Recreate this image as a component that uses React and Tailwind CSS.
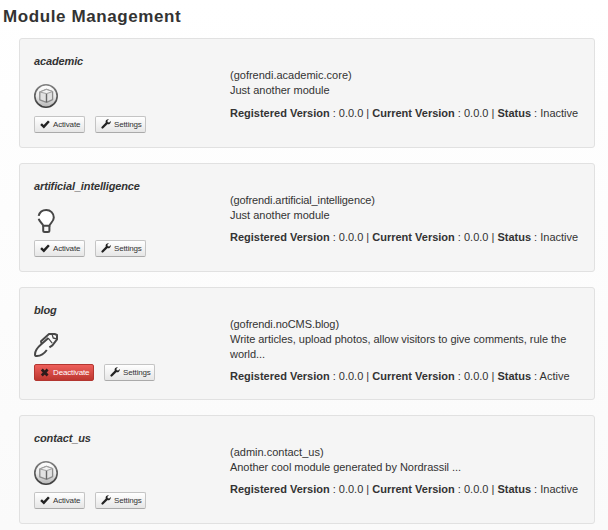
import React from "react";

function CubeIcon() {
  return (
    <svg width="24" height="24" viewBox="0 0 24 24" fill="none">
      <defs>
        <linearGradient id="ring" x1="0" y1="0" x2="0" y2="1">
          <stop offset="0" stopColor="#808080" />
          <stop offset="1" stopColor="#3c3c3c" />
        </linearGradient>
        <linearGradient id="disc" x1="0" y1="0" x2="0" y2="1">
          <stop offset="0" stopColor="#ffffff" />
          <stop offset="0.5" stopColor="#ececec" />
          <stop offset="1" stopColor="#b4b4b4" />
        </linearGradient>
      </defs>
      <circle cx="12" cy="12" r="11.2" fill="url(#disc)" stroke="url(#ring)" strokeWidth="1.6" />
      <path d="M5.8 8 L12.4 5.4 L18.6 7.6 V15.6 L12.6 18.4 L5.8 15.8 Z" fill="#e2e2e2" stroke="#8c8c8c" strokeWidth="1.3" strokeLinejoin="round" />
      <path d="M5.8 8 L12.4 5.4 L18.6 7.6 L12.6 9.6 Z" fill="#f2f2f2" stroke="#a0a0a0" strokeWidth="1" />
      <path d="M12.5 9.8 V18.2" stroke="#666" strokeWidth="1.4" />
    </svg>
  );
}

function BulbIcon() {
  return (
    <svg width="24" height="24" viewBox="0 0 24 24" fill="none" stroke="#474747" strokeWidth="2">
      <path d="M9.3 16.8 C8.8 14.6 4.4 12.6 4.4 8.6 C4.4 4.4 8 1 12.3 1 C16.5 1 19.8 4.2 19.8 8.3 C19.8 12.8 16 14.4 15.4 16.8 Z" fill="#fff" stroke="none" />
      <path d="M4.7 6.9 C5.5 3.3 8.6 1 12.3 1 C16.5 1 19.8 4.2 19.8 8.6 C19.8 13 15.8 14 15.4 16.8 H9.3 C8.7 14.2 5.4 13 4.7 9.8" />
      <path d="M9.2 16.8 V21.4 Q9.2 22.9 10.7 22.9 H13.9 Q15.4 22.9 15.4 21.4 V16.8" />
    </svg>
  );
}

function PenIcon() {
  return (
    <svg width="24" height="24" viewBox="0 0 24 24" fill="none" stroke="#474747" strokeWidth="2" strokeLinejoin="round">
      <path d="M1 23 C0.6 17 3 13.5 8 10 L15 1.5 L22.8 1.2 L23 6 L16 15 C11 21.5 6.5 23.5 1 23 Z" fill="#fafafa" stroke="none" />
      <path d="M15.4 14.4 L18.4 12.4 L23 6.4 V2 L20.6 1 H15 L7 8.2 L7.6 10.4" />
      <path d="M14.4 5 L7 11.4 C3.2 14.6 1 17.8 1 21.4 Q1 23 2.8 23 C7.4 22.8 10.4 20.4 12.8 17" />
      <path d="M14.2 5.2 L18.2 10.2" strokeWidth="1.2" />
      <path d="M18.2 1.6 L19.2 5 L22.6 5.8" strokeWidth="1.3" />
    </svg>
  );
}

function CheckGlyph() {
  return (
    <svg width="10" height="9" viewBox="0 0 10 9" className="mb-px shrink-0">
      <path d="M0.2 5 L1.9 3.3 L3.7 4.9 L8 0.4 L9.8 2.1 L3.9 8.5 Z" fill="#222" />
    </svg>
  );
}

function CrossGlyph() {
  return (
    <svg width="10" height="9" viewBox="0 0 10 9" className="mb-px shrink-0">
      <path d="M1.8 1.5 L7.6 7.5 M7.6 1.5 L1.8 7.5" stroke="#2c1b1b" strokeWidth="2.7" />
    </svg>
  );
}

function WrenchGlyph() {
  return (
    <svg width="10" height="10" viewBox="0 0 10 10" className="mb-[2px] shrink-0">
      <path d="M1.5 8.5 L5.6 4.4" stroke="#222" strokeWidth="2.2" strokeLinecap="round" />
      <path d="M7.9 0.3 L6.4 1.8 L6.7 3.3 L8.2 3.6 L9.7 2.1 C10.1 4 8.6 5.6 6.8 5.3 L4.7 3.6 C4.2 1.5 5.8 -0.2 7.9 0.3 Z" fill="#222" />
    </svg>
  );
}

function Button({ glyph, label, danger }) {
  const tone = danger
    ? "w-[60px] border-[#b33630] bg-linear-to-b from-[#ee5f5b] to-[#bd362f] text-white"
    : "w-[51px] border-[#c4c4c4] border-b-[#aaa] bg-linear-to-b from-white to-[#e6e6e6] text-[#333]";
  return (
    <button
      className={`flex h-[17px] items-center gap-[3px] rounded-[2px] border pl-[5px] text-[8px] leading-none tracking-[-0.15px] whitespace-nowrap ${tone}`}
    >
      {glyph}
      <span>{label}</span>
    </button>
  );
}

function Module({ name, path, pathTracking = "", description, textTracking = "", status, icon, height, buttonGap, statusGap }) {
  const active = status === "Active";
  return (
    <section className={`flex rounded-[3px] border border-[#e1e1e1] bg-[#f5f5f5] pl-[14px] ${height}`}>
      <div className="w-[196px] shrink-0 pt-[15px]">
        <h2 className="h-[15px] text-[11px] leading-[15px] font-bold tracking-[-0.13px] italic">{name}</h2>
        <div className="mt-[15px] h-6">{icon}</div>
        <div className={`flex gap-[10px] ${buttonGap}`}>
          {active ? (
            <Button danger glyph={<CrossGlyph />} label="Deactivate" />
          ) : (
            <Button glyph={<CheckGlyph />} label="Activate" />
          )}
          <Button glyph={<WrenchGlyph />} label="Settings" />
        </div>
      </div>
      <div className="w-[352px] pt-[29px] text-[11px] leading-[15px]">
        <p className={pathTracking}>{path}</p>
        <p className={textTracking}>{description}</p>
        <p className={`whitespace-nowrap ${statusGap}`}>
          <b>Registered Version</b> : 0.0.0 | <b>Current Version</b> : 0.0.0 | <b>Status</b> : {status}
        </p>
      </div>
    </section>
  );
}

export default function App() {
  return (
    <main className="h-[530px] w-[608px] overflow-hidden bg-linear-to-b from-white to-[#fafafa] font-['Liberation_Sans',Arial,sans-serif] text-[#333]">
      <h1 className="h-[38px] pt-[7px] pl-[3px] text-[17px] leading-5 font-bold tracking-[0.6px]">Module Management</h1>
      <div className="ml-[19px] w-[576px]">
        <Module name="academic" path="(gofrendi.academic.core)" description="Just another module" status="Inactive" icon={<CubeIcon />} height="h-[110px] mb-[15px]" buttonGap="mt-[8px]" statusGap="mt-[8px]" />
        <Module name="artificial_intelligence" path="(gofrendi.artificial_intelligence)" pathTracking="tracking-[-0.11px]" description="Just another module" status="Inactive" icon={<BulbIcon />} height="h-[109px] mb-[15px]" buttonGap="mt-[7px]" statusGap="mt-[7px]" />
        <Module name="blog" path="(gofrendi.noCMS.blog)" pathTracking="tracking-[-0.08px]" description="Write articles, upload photos, allow visitors to give comments, rule the world..." textTracking="tracking-[-0.04px]" status="Active" icon={<PenIcon />} height="h-[113px] mb-[15px]" buttonGap="mt-[7px]" statusGap="mt-[7px]" />
        <Module name="contact_us" path="(admin.contact_us)" description="Another cool module generated by Nordrassil ..." textTracking="tracking-[-0.04px]" status="Inactive" icon={<CubeIcon />} height="h-[109px]" buttonGap="mt-[7px]" statusGap="mt-[7px]" />
      </div>
    </main>
  );
}
